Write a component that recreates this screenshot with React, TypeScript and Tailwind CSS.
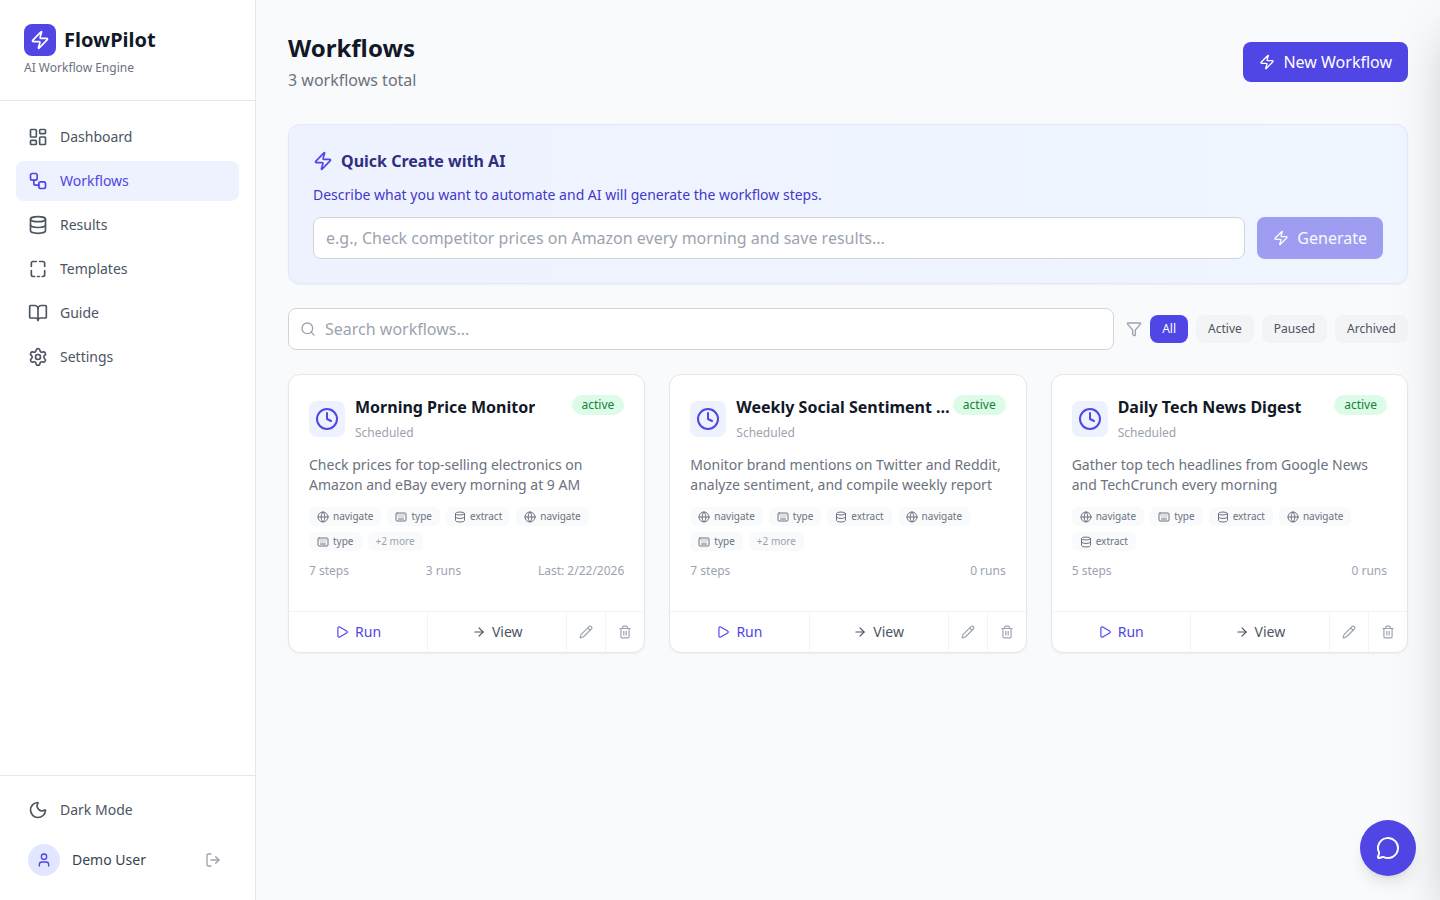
import {
  ArrowRight,
  BookOpen,
  Clock,
  Database,
  Filter,
  Globe,
  Keyboard,
  LayoutDashboard,
  LogOut,
  MessageCircle,
  Moon,
  Pencil,
  Play,
  Search,
  Settings,
  Trash2,
  User,
  Workflow,
  Zap,
} from 'lucide-react'

function TemplatesIcon({ className }: { className?: string }) {
  return (
    <svg
      viewBox="0 0 24 24"
      fill="none"
      stroke="currentColor"
      strokeWidth="2"
      strokeLinecap="round"
      strokeLinejoin="round"
      className={className}
    >
      <path d="M10 3H6a2 2 0 0 0-2 2v4" />
      <path d="M14 3h4a2 2 0 0 1 2 2v4" />
      <path d="M4 14v5a2 2 0 0 0 2 2h2" />
      <path d="M20 14v5a2 2 0 0 1-2 2h-1" />
      <path d="M11.5 21h2" />
    </svg>
  )
}

const navItems = [
  { label: 'Dashboard', icon: LayoutDashboard },
  { label: 'Workflows', icon: Workflow, active: true },
  { label: 'Results', icon: Database },
  { label: 'Templates', icon: TemplatesIcon },
  { label: 'Guide', icon: BookOpen },
  { label: 'Settings', icon: Settings },
]

const stepIcons = { navigate: Globe, type: Keyboard, extract: Database }
type StepName = keyof typeof stepIcons

const workflows: {
  title: string
  description: string
  steps: StepName[]
  more?: number
  stats: string[]
}[] = [
  {
    title: 'Morning Price Monitor',
    description: 'Check prices for top-selling electronics on Amazon and eBay every morning at 9 AM',
    steps: ['navigate', 'type', 'extract', 'navigate', 'type'],
    more: 2,
    stats: ['7 steps', '3 runs', 'Last: 2/22/2026'],
  },
  {
    title: 'Weekly Social Sentiment Report',
    description: 'Monitor brand mentions on Twitter and Reddit, analyze sentiment, and compile weekly report',
    steps: ['navigate', 'type', 'extract', 'navigate', 'type'],
    more: 2,
    stats: ['7 steps', '0 runs'],
  },
  {
    title: 'Daily Tech News Digest',
    description: 'Gather top tech headlines from Google News and TechCrunch every morning',
    steps: ['navigate', 'type', 'extract', 'navigate', 'extract'],
    stats: ['5 steps', '0 runs'],
  },
]

function Sidebar() {
  return (
    <aside className="w-64 shrink-0 min-h-screen bg-white border-r border-[#e5e7eb] flex flex-col">
      <div className="h-[101px] px-6 pt-6 border-b border-[#e5e7eb]">
        <div className="flex items-center gap-2">
          <div className="w-8 h-8 rounded-lg bg-[#4f46e5] flex items-center justify-center">
            <Zap className="w-5 h-5 text-white" />
          </div>
          <span className="text-xl leading-7 font-bold text-[#111827]">FlowPilot</span>
        </div>
        <p className="text-xs leading-4 text-[#6b7280] mt-1">AI Workflow Engine</p>
      </div>

      <nav className="flex-1 p-4 flex flex-col gap-1">
        {navItems.map((item) => (
          <a
            key={item.label}
            className={`h-10 px-3 rounded-lg flex items-center gap-3 text-sm ${
              item.active ? 'bg-[#eef2ff] text-[#4f46e5]' : 'text-[#4b5563]'
            }`}
          >
            <item.icon className="w-5 h-5" />
            {item.label}
          </a>
        ))}
      </nav>

      <div className="h-[125px] border-t border-[#e5e7eb] px-4 pt-3.5">
        <button className="w-full h-10 px-3 rounded-lg flex items-center gap-3 text-sm text-[#4b5563]">
          <Moon className="w-5 h-5" />
          Dark Mode
        </button>
        <div className="mt-1.5 px-3 h-[48px] flex items-center gap-3">
          <div className="w-8 h-8 rounded-full bg-[#e0e7ff] flex items-center justify-center">
            <User className="w-4 h-4 text-[#4f46e5]" />
          </div>
          <span className="flex-1 text-sm text-[#374151]">Demo User</span>
          <LogOut className="w-4 h-4 text-[#9ca3af] mr-1.5" />
        </div>
      </div>
    </aside>
  )
}

function WorkflowCard({ workflow }: { workflow: (typeof workflows)[number] }) {
  return (
    <div className="bg-white border border-[#e5e7eb] rounded-xl shadow-xs overflow-hidden min-w-0">
      <div className="px-5 pt-5 pb-8">
        <div className="flex items-start">
          <div className="flex-1 min-w-0 h-12 flex items-center gap-2.5">
            <div className="w-9 h-9 shrink-0 rounded-lg bg-[#eef2ff] flex items-center justify-center">
              <Clock className="w-6 h-6 text-[#4f46e5]" />
            </div>
            <div className="min-w-0 self-start">
              <h3 className="text-base leading-6 font-bold text-[#111827] truncate">{workflow.title}</h3>
              <p className="text-xs leading-4 text-[#9ca3af] mt-1.5">Scheduled</p>
            </div>
          </div>
          <span className="shrink-0 ml-0.5 px-2.5 py-0.5 rounded-full bg-[#dcfce7] text-[#15803d] text-xs leading-4">
            active
          </span>
        </div>

        <p className="mt-3 text-sm leading-5 text-[#6b7280]">{workflow.description}</p>

        <div className="mt-3 flex flex-wrap gap-1.5">
          {workflow.steps.map((step, i) => {
            const Icon = stepIcons[step]
            return (
              <span
                key={i}
                className="px-2 py-0.5 rounded-md bg-[#f9fafb] flex items-center gap-1 text-[10px] leading-[15px] text-[#6b7280]"
              >
                <Icon className="w-3 h-3" />
                {step}
              </span>
            )
          })}
          {workflow.more && (
            <span className="px-2 py-0.5 rounded-md bg-[#f9fafb] text-[10px] leading-[15px] text-[#9ca3af]">
              +{workflow.more} more
            </span>
          )}
        </div>

        <div className="mt-3 flex justify-between text-xs leading-4 text-[#9ca3af]">
          {workflow.stats.map((s) => (
            <span key={s}>{s}</span>
          ))}
        </div>
      </div>

      <div className="flex border-t border-[#f3f4f6]">
        <button className="flex-1 py-2.5 flex items-center justify-center gap-1.5 text-sm text-[#4f46e5] border-r border-[#f3f4f6]">
          <Play className="w-3.5 h-3.5" />
          Run
        </button>
        <button className="flex-1 py-2.5 flex items-center justify-center gap-1.5 text-sm text-[#4b5563] border-r border-[#f3f4f6]">
          <ArrowRight className="w-3.5 h-3.5" />
          View
        </button>
        <button className="px-3 py-2.5 text-[#9ca3af] border-r border-[#f3f4f6]">
          <Pencil className="w-3.5 h-3.5" />
        </button>
        <button className="px-3 py-2.5 text-[#9ca3af]">
          <Trash2 className="w-3.5 h-3.5" />
        </button>
      </div>
    </div>
  )
}

export default function App() {
  return (
    <div className="flex min-h-screen bg-[#f9fafb] font-['Noto_Sans',sans-serif]">
      <Sidebar />

      <main className="flex-1 min-w-0 p-8">
        <div className="flex items-center justify-between mb-8">
          <div>
            <h1 className="text-2xl leading-8 font-bold text-[#111827]">Workflows</h1>
            <p className="mt-1 text-base leading-6 text-[#6b7280]">3 workflows total</p>
          </div>
          <button className="h-10 px-4 rounded-lg bg-[#4f46e5] text-white flex items-center gap-2">
            <Zap className="w-4 h-4" />
            New Workflow
          </button>
        </div>

        <div className="mb-6 p-6 rounded-xl border border-[#e0e7ff] bg-gradient-to-r from-[#eef2ff] to-[#eff6ff] shadow-xs">
          <div className="flex items-center gap-2 mb-3">
            <Zap className="w-5 h-5 text-[#4f46e5]" />
            <h2 className="text-base leading-6 font-bold text-[#312e81]">Quick Create with AI</h2>
          </div>
          <p className="mb-3 text-sm leading-5 text-[#4338ca]">
            Describe what you want to automate and AI will generate the workflow steps.
          </p>
          <div className="flex gap-3">
            <input
              className="flex-1 h-[42px] px-3 rounded-lg border border-[#d1d5db] bg-white text-base placeholder:text-[#9ca3af] outline-none"
              placeholder="e.g., Check competitor prices on Amazon every morning and save results..."
            />
            <button className="h-[42px] px-4 rounded-lg bg-[#4f46e5] opacity-50 text-white flex items-center gap-2">
              <Zap className="w-4 h-4" />
              Generate
            </button>
          </div>
        </div>

        <div className="mb-6 flex items-center gap-3">
          <div className="relative flex-1">
            <Search className="absolute left-3 top-[13px] w-4 h-4 text-[#9ca3af]" />
            <input
              className="w-full h-[42px] pl-9 pr-3 rounded-lg border border-[#d1d5db] bg-white text-base placeholder:text-[#9ca3af] outline-none"
              placeholder="Search workflows..."
            />
          </div>
          <div className="flex items-center gap-2">
            <Filter className="w-4 h-4 text-[#9ca3af]" />
            {['All', 'Active', 'Paused', 'Archived'].map((f) => (
              <button
                key={f}
                className={`px-3 py-1.5 rounded-lg text-xs leading-4 ${
                  f === 'All' ? 'bg-[#4f46e5] text-white' : 'bg-[#f3f4f6] text-[#4b5563]'
                }`}
              >
                {f}
              </button>
            ))}
          </div>
        </div>

        <div className="grid grid-cols-3 gap-6">
          {workflows.map((w) => (
            <WorkflowCard key={w.title} workflow={w} />
          ))}
        </div>
      </main>

      <button className="fixed right-6 bottom-6 w-14 h-14 rounded-full bg-[#4f46e5] text-white shadow-lg flex items-center justify-center">
        <MessageCircle className="w-6 h-6" />
      </button>
      {/* closed chat drawer, only its shadow shows at the edge */}
      <div className="fixed top-0 right-0 h-screen w-96 translate-x-full bg-white shadow-2xl" />
    </div>
  )
}
